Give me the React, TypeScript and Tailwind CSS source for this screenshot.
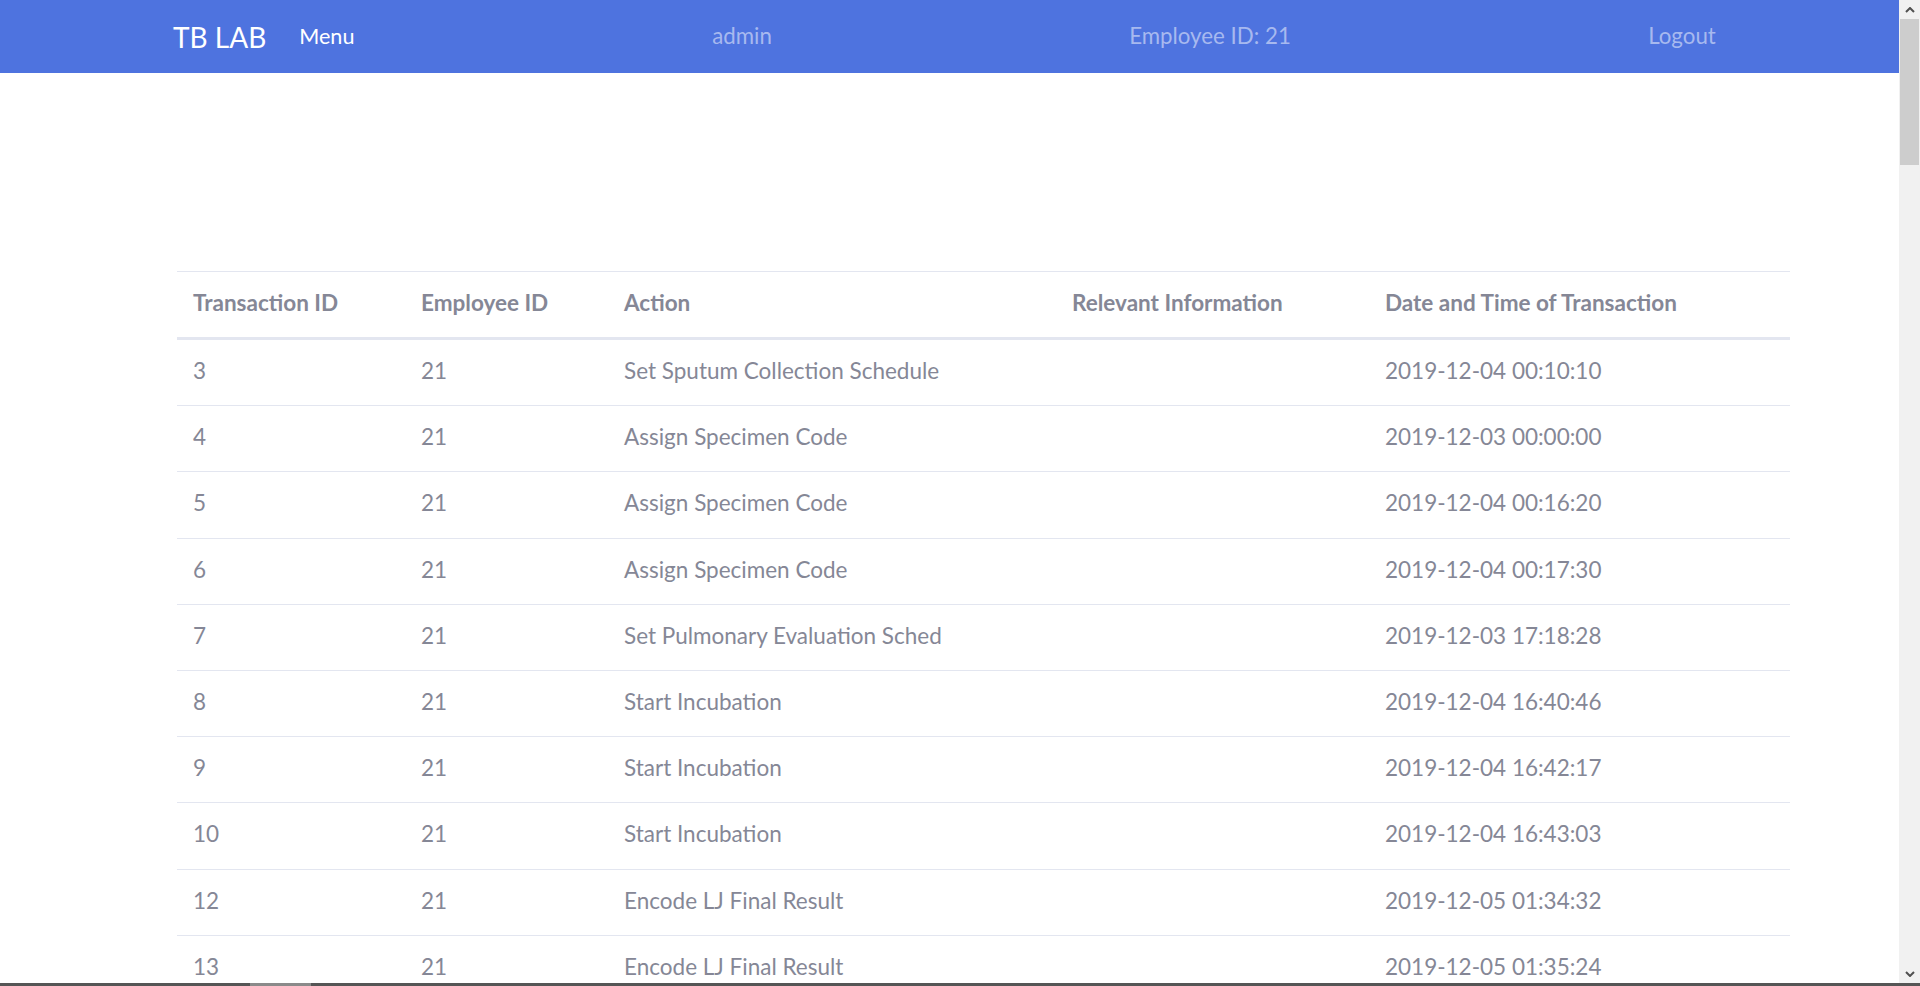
const rows = [
  { id: "3", emp: "21", action: "Set Sputum Collection Schedule", info: "", date: "2019-12-04 00:10:10" },
  { id: "4", emp: "21", action: "Assign Specimen Code", info: "", date: "2019-12-03 00:00:00" },
  { id: "5", emp: "21", action: "Assign Specimen Code", info: "", date: "2019-12-04 00:16:20" },
  { id: "6", emp: "21", action: "Assign Specimen Code", info: "", date: "2019-12-04 00:17:30" },
  { id: "7", emp: "21", action: "Set Pulmonary Evaluation Sched", info: "", date: "2019-12-03 17:18:28" },
  { id: "8", emp: "21", action: "Start Incubation", info: "", date: "2019-12-04 16:40:46" },
  { id: "9", emp: "21", action: "Start Incubation", info: "", date: "2019-12-04 16:42:17" },
  { id: "10", emp: "21", action: "Start Incubation", info: "", date: "2019-12-04 16:43:03" },
  { id: "12", emp: "21", action: "Encode LJ Final Result", info: "", date: "2019-12-05 01:34:32" },
  { id: "13", emp: "21", action: "Encode LJ Final Result", info: "", date: "2019-12-05 01:35:24" },
  { id: "14", emp: "21", action: "Encode LJ Final Result", info: "", date: "2019-12-05 01:36:10" },
];

const Navbar = () => {
  return (
    <nav className="h-[73px] shrink-0 bg-[#4e73df] flex items-center">
      {/* brand + menu */}
      <div className="w-[507px] shrink-0 flex items-center pl-[173px]">
        <span className="text-white text-[28px] leading-none">TB LAB</span>
        <span className="text-white text-[21.6px] leading-none ml-[33px]">Menu</span>
      </div>

      {/* right links */}
      <div className="flex shrink-0 text-[22.3px] leading-none text-[#a7b9ef]">
        <div className="w-[470px] shrink-0 text-center">admin</div>
        <div className="w-[470px] shrink-0 text-center pr-[4px]">Employee ID: 21</div>
        <div className="w-[470px] shrink-0 text-center">Logout</div>
      </div>
    </nav>
  );
};

const Scrollbar = () => {
  return (
    <div className="w-[21px] shrink-0 bg-[#f1f1f1] flex flex-col">
      <div className="h-[19px] flex items-center justify-center">
        <svg width="10" height="6" viewBox="0 0 10 6">
          <path d="M1 5 L5 1 L9 5" stroke="#505050" strokeWidth="2" fill="none" />
        </svg>
      </div>
      <div className="h-[146px] ml-[1px] mr-[1px] bg-[#cdcdcd]" />
      <div className="flex-1" />
      <div className="h-[19px] flex items-center justify-center">
        <svg width="10" height="6" viewBox="0 0 10 6">
          <path d="M1 1 L5 5 L9 1" stroke="#505050" strokeWidth="2" fill="none" />
        </svg>
      </div>
    </div>
  );
};

export default function App() {
  return (
    <div className="h-[986px] w-[1920px] overflow-hidden flex flex-col bg-white font-['Lato',sans-serif]">
      <div className="flex flex-1 min-h-0">
        <div className="w-[1899px] shrink-0 flex flex-col overflow-hidden">
          <Navbar />

          <main className="pt-[198px] pl-[177px]">
            <table className="w-[1613px] table-fixed border-collapse text-left text-[#858796] text-[22.5px] leading-[32.4px]">
              <colgroup>
                <col className="w-[228px]" />
                <col className="w-[203px]" />
                <col className="w-[448px]" />
                <col className="w-[313px]" />
                <col className="w-[421px]" />
              </colgroup>
              <thead>
                <tr className="border-t border-b-[3px] border-[#e3e6f0]">
                  <th className="px-[16px] pt-[15px] pb-[17.5px] font-bold">Transaction ID</th>
                  <th className="px-[16px] pt-[15px] pb-[17.5px] font-bold">Employee ID</th>
                  <th className="px-[16px] pt-[15px] pb-[17.5px] font-bold">Action</th>
                  <th className="px-[16px] pt-[15px] pb-[17.5px] font-bold">Relevant Information</th>
                  <th className="px-[16px] pt-[15px] pb-[17.5px] font-bold">Date and Time of Transaction</th>
                </tr>
              </thead>
              <tbody>
                {rows.map((r) => (
                  <tr key={r.id} className="border-t border-[#e3e6f0]">
                    <td className="px-[16px] pt-[15px] pb-[17.8px]">{r.id}</td>
                    <td className="px-[16px] pt-[15px] pb-[17.8px]">{r.emp}</td>
                    <td className="px-[16px] pt-[15px] pb-[17.8px]">{r.action}</td>
                    <td className="px-[16px] pt-[15px] pb-[17.8px]">{r.info}</td>
                    <td className="px-[16px] pt-[15px] pb-[17.8px]">{r.date}</td>
                  </tr>
                ))}
              </tbody>
            </table>
          </main>
        </div>

        <Scrollbar />
      </div>

      {/* bottom strip */}
      <div className="h-[3px] shrink-0 bg-[#555555] flex">
        <div className="ml-[250px] w-[61px] bg-[#8a8a8a]" />
      </div>
    </div>
  );
}
